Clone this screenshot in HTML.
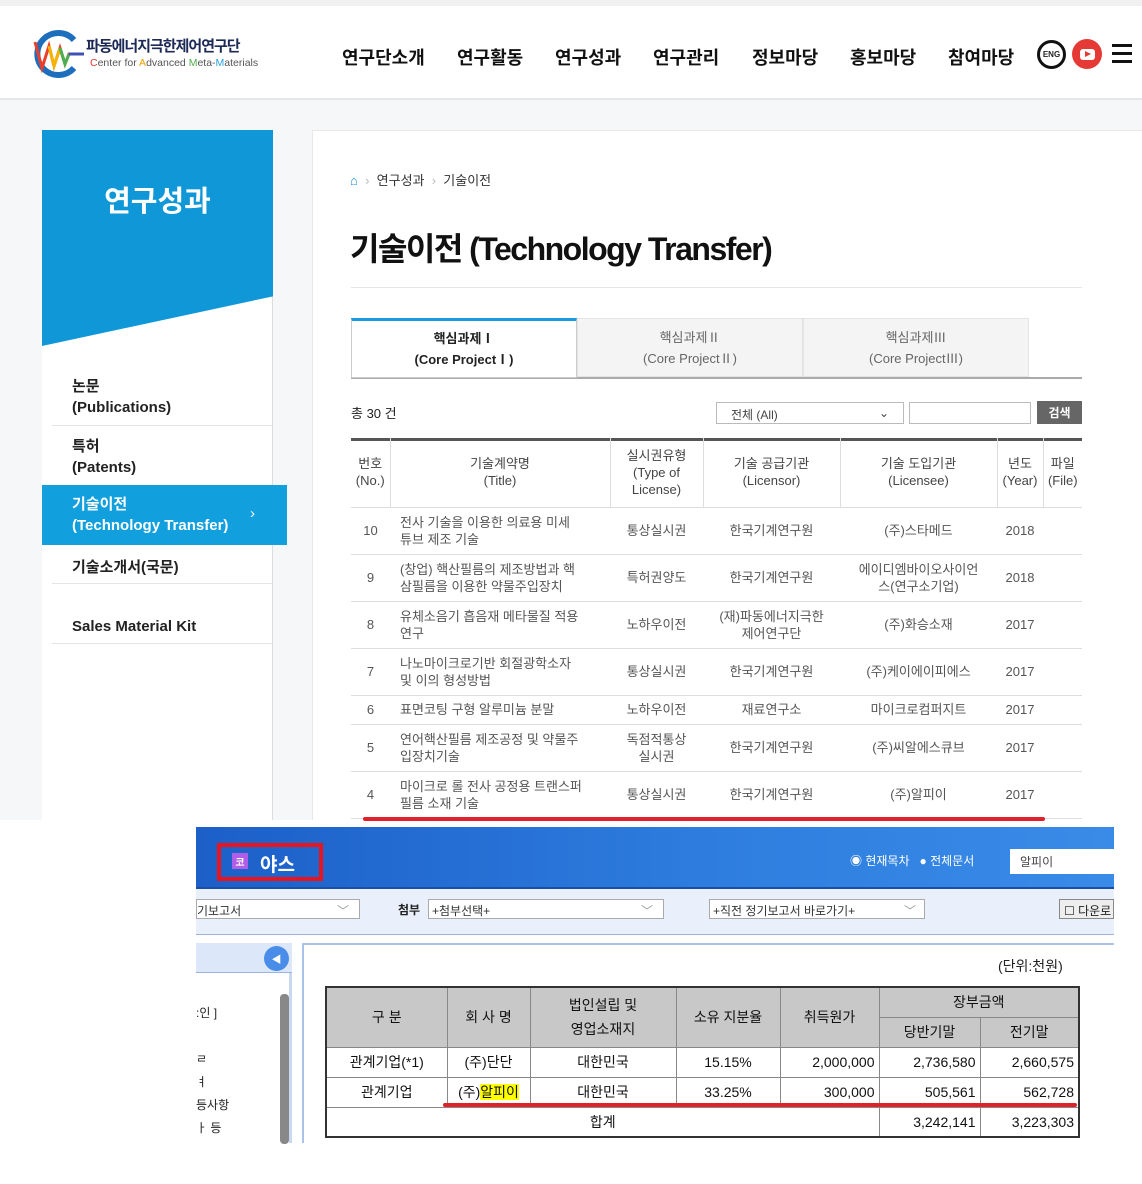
<!DOCTYPE html>
<html><head><meta charset="utf-8"><style>
*{box-sizing:border-box;margin:0;padding:0}
body{width:1142px;height:1184px;position:relative;overflow:hidden;background:#fff;font-family:"Liberation Sans","Noto Sans CJK KR",sans-serif;color:#222}
.a{position:absolute}
.nav span{position:absolute;top:44px;font-size:18px;font-weight:bold;color:#111}
.c{display:flex;align-items:center;justify-content:center;text-align:center}
.side div.it{position:absolute;left:52px;width:220px;border-bottom:1px solid #e5e5e5;font-size:15px;font-weight:bold;color:#222;line-height:21px;padding-left:20px;padding-top:2px}
table{border-collapse:collapse}
#t{position:absolute;left:351px;top:438px;width:731px;font-size:13px;color:#555}
#t td,#t th{border-bottom:1px solid #ddd;text-align:center;font-weight:normal;line-height:17px}
#t th{border-right:1px solid #ddd;color:#444}
#t th:last-child{border-right:none}
#t td.l{text-align:left;padding-left:10px}
#b{position:absolute;left:325px;top:986px;width:755px;font-size:14px;color:#111;border:2px solid #333}
#b td{border:1px solid #888;height:30px;text-align:center}
#b .h{background:#c8c8c8}
#b .r{text-align:right;padding-right:4px}
</style></head><body>
<div class="a" style="left:0;top:0;width:1142px;height:6px;background:#f1f1f1"></div>
<div class="a" style="left:0;top:98px;width:1142px;height:2px;background:#e4e6e8"></div>
<div class="a" style="left:0;top:100px;width:1142px;height:720px;background:#f6f7f8"></div>
<!-- logo -->
<svg class="a" style="left:32px;top:30px" width="54" height="48" viewBox="0 0 54 48">
<path d="M42 10 A21 21 0 1 0 42 38" fill="none" stroke="#1d6fbd" stroke-width="6"/>
<path d="M3 12 L10 38 L17 16 L22 36 L28 18 L33 34 L37 24 L52 24" fill="none" stroke="#e8402a" stroke-width="3"/>
<path d="M17 16 L22 36 L28 18" fill="none" stroke="#f4b400" stroke-width="3"/>
<path d="M28 18 L33 34 L37 24" fill="none" stroke="#4caf50" stroke-width="3"/>
<path d="M37 24 L52 24" stroke="#3f51b5" stroke-width="3"/>
</svg>
<div class="a" style="left:86px;top:38px;font-size:15px;line-height:18px;font-weight:bold;color:#1c2a55;letter-spacing:-1px;white-space:nowrap">파동에너지극한제어연구단</div>
<div class="a" style="left:90px;top:57px;font-size:10.5px;line-height:12px;color:#555;white-space:nowrap"><span style="color:#e53935">C</span>enter for <span style="color:#f4a000">A</span>dvanced <span style="color:#4caf50">M</span>eta-<span style="color:#29a3e0">M</span>aterials</div>
<div class="nav">
<span style="left:342px">연구단소개</span><span style="left:457px">연구활동</span><span style="left:555px">연구성과</span><span style="left:653px">연구관리</span><span style="left:752px">정보마당</span><span style="left:850px">홍보마당</span><span style="left:948px">참여마당</span>
</div>
<div class="a c" style="left:1037px;top:40px;width:29px;height:29px;border:3px solid #111;border-radius:50%;font-size:8px;font-weight:bold">ENG</div>
<div class="a c" style="left:1072px;top:39px;width:30px;height:30px;background:#e53935;border-radius:50%"><div style="width:15px;height:11px;background:#fff;border-radius:3px;position:relative"><div style="position:absolute;left:5px;top:2px;border-left:6px solid #e53935;border-top:3.5px solid transparent;border-bottom:3.5px solid transparent"></div></div></div>
<div class="a" style="left:1112px;top:44px;width:20px;height:3px;background:#111;box-shadow:0 8px 0 #111,0 16px 0 #111"></div>
<!-- sidebar -->
<div class="a side" style="left:42px;top:130px;width:231px;height:690px;background:#fff;border-right:1px solid #ddd">
</div>
<div class="a" style="left:42px;top:130px;width:231px;height:216px;background:#0f97d8;clip-path:polygon(0 0,100% 0,100% 77%,0 100%)"></div>
<div class="a" style="left:42px;top:178px;width:231px;text-align:center;color:#fff;font-size:29px;font-weight:bold">연구성과</div>
<div class="side">
<div class="it" style="top:374px;height:52px">논문<br>(Publications)</div>
<div class="it" style="top:434px;height:52px">특허<br>(Patents)</div>
<div class="it" style="top:555px;height:29px">기술소개서(국문)</div>
<div class="it" style="top:614px;height:30px">Sales Material Kit</div>
</div>
<div class="a" style="left:42px;top:485px;width:245px;height:60px;background:#119fdd;color:#fff;font-size:15px;font-weight:bold;line-height:21px;padding:9px 0 0 30px">기술이전<br>(Technology Transfer)<span style="position:absolute;left:208px;top:18px;font-weight:normal">›</span></div>
<!-- content -->
<div class="a" style="left:312px;top:130px;width:830px;height:690px;background:#fff;border-left:1px solid #e8e8e8;border-top:1px solid #e8e8e8"></div>
<div class="a" style="left:350px;top:170px;font-size:13px;color:#333"><span style="color:#1a8fd8">⌂</span> <span style="color:#bbb">&nbsp;›&nbsp;</span> 연구성과 <span style="color:#bbb">&nbsp;›&nbsp;</span> 기술이전</div>
<div class="a" style="left:350px;top:224px;font-size:32px;font-weight:bold;color:#111;letter-spacing:-1.5px">기술이전 (Technology Transfer)</div>
<div class="a" style="left:351px;top:287px;width:731px;height:1px;background:#e5e5e5"></div>
<div class="a" style="left:351px;top:377px;width:731px;height:2px;background:#aaa"></div>
<div class="a c" style="left:351px;top:318px;width:226px;height:60px;background:#fff;border:1px solid #ccc;border-top:3px solid #1a9be0;font-size:13px;font-weight:bold;line-height:21px">핵심과제Ⅰ<br>(Core ProjectⅠ)</div>
<div class="a c" style="left:577px;top:318px;width:226px;height:59px;background:#f4f4f4;border:1px solid #e4e4e4;font-size:13px;color:#666;line-height:21px">핵심과제Ⅱ<br>(Core ProjectⅡ)</div>
<div class="a c" style="left:803px;top:318px;width:226px;height:59px;background:#f4f4f4;border:1px solid #e4e4e4;font-size:13px;color:#666;line-height:21px">핵심과제Ⅲ<br>(Core ProjectⅢ)</div>
<div class="a" style="left:351px;top:403px;font-size:13px">총 30 건</div>
<div class="a" style="left:716px;top:402px;width:188px;height:22px;border:1px solid #bbb;font-size:12px;color:#444;padding:3px 14px">전체 (All)<span style="float:right">⌄</span></div>
<div class="a" style="left:909px;top:402px;width:122px;height:22px;border:1px solid #bbb"></div>
<div class="a c" style="left:1037px;top:401px;width:45px;height:23px;background:#666;color:#fff;font-size:12px;font-weight:bold">검색</div>
<div class="a" style="left:351px;top:438px;width:731px;height:3px;background:#555"></div>
<table id="t">
<tr style="height:69px"><th style="width:39px">번호<br>(No.)</th><th style="width:220px">기술계약명<br>(Title)</th><th style="width:93px">실시권유형<br>(Type of<br>License)</th><th style="width:137px">기술 공급기관<br>(Licensor)</th><th style="width:157px">기술 도입기관<br>(Licensee)</th><th style="width:46px">년도<br>(Year)</th><th>파일<br>(File)</th></tr>
<tr style="height:47px"><td>10</td><td class="l">전사 기술을 이용한 의료용 미세<br>튜브 제조 기술</td><td>통상실시권</td><td>한국기계연구원</td><td>(주)스타메드</td><td>2018</td><td></td></tr>
<tr style="height:47px"><td>9</td><td class="l">(창업) 핵산필름의 제조방법과 핵<br>삼필름을 이용한 약물주입장치</td><td>특허권양도</td><td>한국기계연구원</td><td>에이디엠바이오사이언<br>스(연구소기업)</td><td>2018</td><td></td></tr>
<tr style="height:47px"><td>8</td><td class="l">유체소음기 흡음재 메타물질 적용<br>연구</td><td>노하우이전</td><td>(재)파동에너지극한<br>제어연구단</td><td>(주)화승소재</td><td>2017</td><td></td></tr>
<tr style="height:47px"><td>7</td><td class="l">나노마이크로기반 회절광학소자<br>및 이의 형성방법</td><td>통상실시권</td><td>한국기계연구원</td><td>(주)케이에이피에스</td><td>2017</td><td></td></tr>
<tr style="height:29px"><td>6</td><td class="l">표면코팅 구형 알루미늄 분말</td><td>노하우이전</td><td>재료연구소</td><td>마이크로컴퍼지트</td><td>2017</td><td></td></tr>
<tr style="height:47px"><td>5</td><td class="l">연어핵산필름 제조공정 및 약물주<br>입장치기술</td><td>독점적통상<br>실시권</td><td>한국기계연구원</td><td>(주)씨알에스큐브</td><td>2017</td><td></td></tr>
<tr style="height:47px"><td>4</td><td class="l">마이크로 롤 전사 공정용 트랜스퍼<br>필름 소재 기술</td><td>통상실시권</td><td>한국기계연구원</td><td>(주)알피이</td><td>2017</td><td></td></tr>
</table>
<div class="a" style="left:0;top:820px;width:1142px;height:364px;background:#fff"></div>
<div class="a" style="left:363px;top:817px;width:682px;height:4px;background:#e0202a;border-radius:2px"></div>
<!-- bottom screenshot -->
<div class="a" style="left:196px;top:827px;width:918px;height:62px;background:linear-gradient(90deg,#1c5fc8,#2f7fe0 60%,#3a8ae8);border-bottom:2px solid #1a4fa8"></div>
<div class="a" style="left:217px;top:843px;width:106px;height:38px;border:4px solid #e8141e"></div>
<div class="a c" style="left:232px;top:853px;width:16px;height:16px;background:#b05de8;color:#fff;font-size:10px;font-weight:bold">코</div>
<div class="a" style="left:260px;top:850px;color:#fff;font-size:19px;font-weight:bold">야스</div>
<div class="a" style="left:850px;top:852px;color:#fff;font-size:12px">◉ 현재목차 &nbsp; ● 전체문서</div>
<div class="a" style="left:1010px;top:849px;width:104px;height:25px;background:#fff;font-size:12px;color:#444;padding:4px 10px">알피이</div>
<div class="a" style="left:196px;top:889px;width:918px;height:46px;background:#e9f0fb;border-bottom:1px solid #9bb4dc"></div>
<div class="a" style="left:196px;top:899px;width:164px;height:20px;background:#fff;border:1px solid #aaa;font-size:12px;padding:2px 0;color:#333">기보고서<span style="position:absolute;right:10px;color:#999">﹀</span></div>
<div class="a" style="left:398px;top:901px;font-size:12px;font-weight:bold">첨부</div>
<div class="a" style="left:428px;top:899px;width:236px;height:20px;background:#fff;border:1px solid #aaa;font-size:12px;padding:2px 3px;color:#333">+첨부선택+<span style="position:absolute;right:10px;color:#999">﹀</span></div>
<div class="a" style="left:709px;top:899px;width:216px;height:20px;background:#fff;border:1px solid #aaa;font-size:12px;padding:2px 3px;color:#333">+직전 정기보고서 바로가기+<span style="position:absolute;right:8px;color:#999">﹀</span></div>
<div class="a" style="left:1059px;top:899px;width:55px;height:20px;background:#eee;border:1px solid #888;font-size:12px;padding:2px 4px;white-space:nowrap;overflow:hidden">☐ 다운로</div>
<div class="a" style="left:196px;top:943px;width:96px;height:200px;background:#fff;border-right:3px solid #c8d8f0"></div>
<div class="a" style="left:196px;top:943px;width:96px;height:30px;background:#dce8fa;border-bottom:1px solid #9bb4dc"></div>
<div class="a c" style="left:264px;top:946px;width:25px;height:25px;border-radius:50%;background:#4a8de8;color:#fff;font-size:10px">◀</div>
<div class="a" style="left:280px;top:994px;width:9px;height:150px;background:#888;border-radius:4px"></div>
<div class="a" style="left:196px;top:1002px;font-size:12px;line-height:23px;color:#222">:인 ]<br><br>ㄹ<br>ㅕ<br>등사항<br>ㅏ 등</div>
<div class="a" style="left:302px;top:943px;width:812px;height:200px;border-left:2px solid #a8c2ea;border-top:2px solid #a8c2ea"></div>
<div class="a" style="left:998px;top:956px;font-size:14px">(단위:천원)</div>
<table id="b">
<tr><td class="h" rowspan="2" style="width:121px">구 분</td><td class="h" rowspan="2" style="width:83px">회 사 명</td><td class="h" rowspan="2" style="width:146px;line-height:24px">법인설립 및<br>영업소재지</td><td class="h" rowspan="2" style="width:104px">소유 지분율</td><td class="h" rowspan="2" style="width:99px">취득원가</td><td class="h" colspan="2">장부금액</td></tr>
<tr><td class="h" style="width:101px">당반기말</td><td class="h">전기말</td></tr>
<tr><td>관계기업(*1)</td><td>(주)단단</td><td>대한민국</td><td>15.15%</td><td class="r">2,000,000</td><td class="r">2,736,580</td><td class="r">2,660,575</td></tr>
<tr><td>관계기업</td><td>(주)<span style="background:#ff0">알피이</span></td><td>대한민국</td><td>33.25%</td><td class="r">300,000</td><td class="r">505,561</td><td class="r">562,728</td></tr>
<tr><td colspan="5">합계</td><td class="r">3,242,141</td><td class="r">3,223,303</td></tr>
</table>
<div class="a" style="left:443px;top:1103px;width:634px;height:4px;background:#e0202a;border-radius:2px"></div>
</body></html>
